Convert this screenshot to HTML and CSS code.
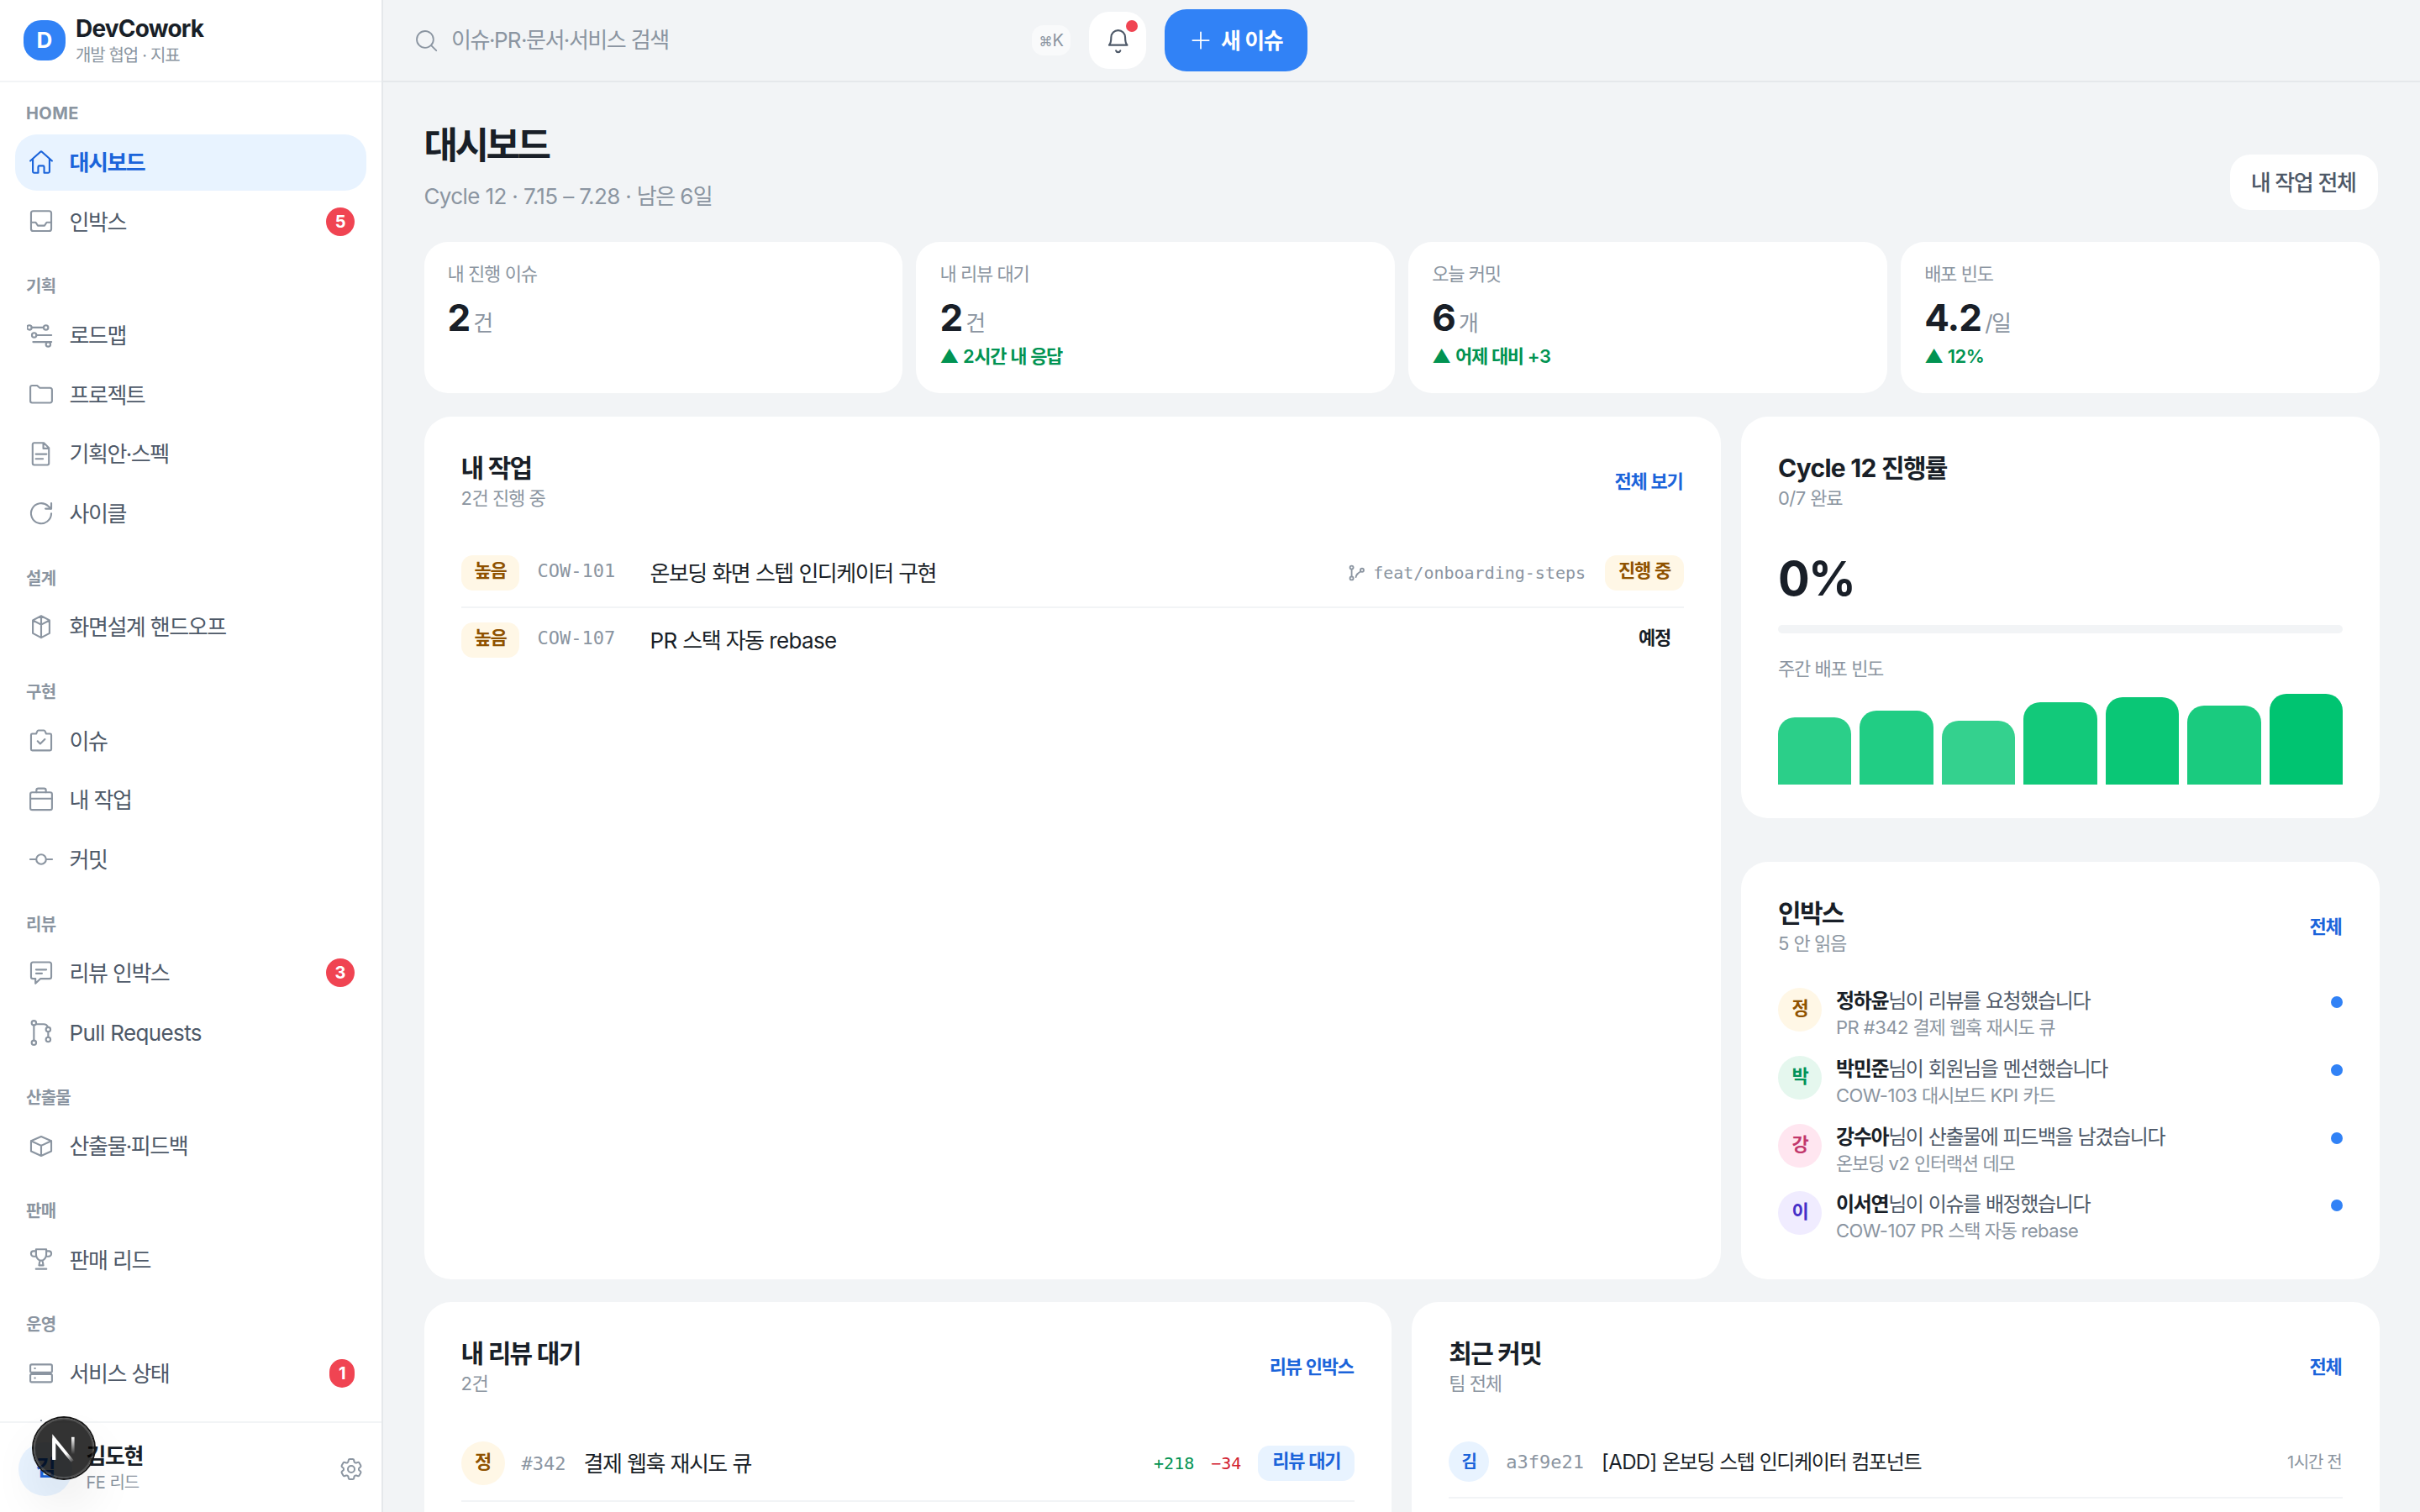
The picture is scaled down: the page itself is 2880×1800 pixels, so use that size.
FILE: index.html
```html
<!DOCTYPE html>
<html lang="ko">
<head>
<meta charset="utf-8">
<title>DevCowork</title>
<link rel="stylesheet" href="styles.css">
</head>
<body>
<div class="app">
  <aside class="sidebar">
    <div class="brand">
      <div class="brand-logo">D</div>
      <div class="brand-text">
        <div class="brand-name">DevCowork</div>
        <div class="brand-sub">개발 협업 · 지표</div>
      </div>
    </div>
    <nav class="nav">
      <section class="nav-group">
        <h3 class="nav-label en">HOME</h3>
        <a class="nav-item active"><svg class="icon" viewBox="0 0 24 24"><path d="M2.9 11l8.3-7.5a1.2 1.2 0 0 1 1.6 0L21.1 11"/><path d="M5 9.4V20a1 1 0 0 0 1 1h3.5v-4.9a1 1 0 0 1 1-1h3a1 1 0 0 1 1 1V21H18a1 1 0 0 0 1-1V9.4"/></svg><span>대시보드</span></a>
        <a class="nav-item"><svg class="icon" viewBox="0 0 24 24"><rect x="3.5" y="3" width="17" height="16.8" rx="1.8"/><path d="M3.5 12.5h3.9l1.8 2.8h5.6l1.8-2.8h3.9"/></svg><span>인박스</span><b class="count">5</b></a>
      </section>
      <section class="nav-group">
        <h3 class="nav-label">기획</h3>
        <a class="nav-item"><svg class="icon" viewBox="0 0 24 24"><circle cx="2.1" cy="5.6" r="1.9"/><circle cx="16" cy="5.6" r="1.9"/><path d="M4 5.6h10.1M8 12h12.6M5.2 17.7h15.4"/><circle cx="6.1" cy="12" r="1.9"/><circle cx="17.9" cy="19.7" r="1.9"/></svg><span>로드맵</span></a>
        <a class="nav-item"><svg class="icon" viewBox="0 0 24 24"><path d="M2.9 5.7A1.500 1.500 0 0 1 4.400 4.200h4.200l2.200 2h8.800a1.500 1.500 0 0 1 1.500 1.500v9.500a1.500 1.500 0 0 1-1.500 1.500H4.400a1.500 1.500 0 0 1-1.500-1.500z"/></svg><span>프로젝트</span></a>
        <a class="nav-item"><svg class="icon" viewBox="0 0 24 24"><path d="M14.200 3H6.100a1.300 1.300 0 0 0-1.300 1.300v15.900a1.300 1.300 0 0 0 1.300 1.300h11.100a1.300 1.300 0 0 0 1.300-1.300V7.300zM13.800 3.200v4.500h4.500M7.500 12.400h9M7.500 16.400h6"/></svg><span>기획안·스펙</span></a>
        <a class="nav-item"><svg class="icon" viewBox="0 0 24 24"><path d="M20.500 12.200a8.500 8.500 0 1 1-2.600-6.200l2.400 2.200"/><path d="M20.500 3.600v4.600h-4.900"/></svg><span>사이클</span></a>
      </section>
      <section class="nav-group">
        <h3 class="nav-label">설계</h3>
        <a class="nav-item"><svg class="icon" viewBox="0 0 24 24"><path d="M12 3l7 3.600v11L12 21.300l-7-3.700v-11zM5 6.700l7 3.600 7-3.600M12 3v18.300"/></svg><span>화면설계 핸드오프</span></a>
      </section>
      <section class="nav-group">
        <h3 class="nav-label">구현</h3>
        <a class="nav-item"><svg class="icon" viewBox="0 0 24 24"><path d="M4.500 6h3.300l1-2.200a1 1 0 0 1 .900-.600h4.600a1 1 0 0 1 .900.600l1 2.200h3.300a1 1 0 0 1 1 1v12a1 1 0 0 1-1 1h-15a1 1 0 0 1-1-1V7a1 1 0 0 1 1-1z"/><path d="M9 12.200l2.200 2.200 3.900-3.800"/></svg><span>이슈</span></a>
        <a class="nav-item"><svg class="icon" viewBox="0 0 24 24"><rect x="2.900" y="5.800" width="18.200" height="14.800" rx="1.600"/><path d="M8 5.800V4.200a1.600 1.600 0 0 1 1.600-1.600h4.800A1.600 1.600 0 0 1 16 4.200v1.600M2.900 11.100h18.200"/></svg><span>내 작업</span></a>
        <a class="nav-item"><svg class="icon" viewBox="0 0 24 24"><circle cx="12" cy="12" r="4.100"/><path d="M2.800 12h5M16.200 12h5"/></svg><span>커밋</span></a>
      </section>
      <section class="nav-group">
        <h3 class="nav-label">리뷰</h3>
        <a class="nav-item"><svg class="icon" viewBox="0 0 24 24"><path d="M5 3.200h14a1.500 1.500 0 0 1 1.500 1.500v10.800A1.500 1.500 0 0 1 19 17h-7.500l-4.300 4v-4H5a1.500 1.500 0 0 1-1.500-1.500V4.700A1.500 1.500 0 0 1 5 3.200zM7.700 9.400h8.600M7.700 12.600h5"/></svg><span>리뷰 인박스</span><b class="count">3</b></a>
        <a class="nav-item"><svg class="icon" viewBox="0 0 24 24"><circle cx="5.900" cy="4.100" r="1.900"/><circle cx="5.900" cy="20.700" r="1.900"/><circle cx="17.900" cy="9.600" r="1.900"/><circle cx="17.900" cy="18" r="1.900"/><path d="M5.900 6v12.800M17.900 11.500v4.600M7.700 5.100h6a4 4 0 0 1 4 2.600"/></svg><span class="en">Pull Requests</span></a>
      </section>
      <section class="nav-group">
        <h3 class="nav-label">산출물</h3>
        <a class="nav-item"><svg class="icon" viewBox="0 0 24 24"><path d="M12 4.300l8.500 3.600v8.700L12 20.500l-8.500-3.900V7.900zM3.500 7.900l8.500 4 8.500-4M12 11.900v8.600"/></svg><span>산출물·피드백</span></a>
      </section>
      <section class="nav-group">
        <h3 class="nav-label">판매</h3>
        <a class="nav-item"><svg class="icon" viewBox="0 0 24 24"><path d="M7.700 3h8.600v4.200c0 2.300-1.500 4.200-3.200 5.200h-2.200c-1.700-1-3.200-2.900-3.200-5.200zM7.700 4.500H5.500a2 2 0 0 0-2 2v.200a2.300 2.300 0 0 0 2.300 2.300h2M16.300 4.500h2.200a2 2 0 0 1 2 2v.200A2.300 2.300 0 0 1 18.200 9h-2M10.900 12.400L10.200 16.500h3.600l-.700-4.100M7.600 19.500h8.800"/></svg><span>판매 리드</span></a>
      </section>
      <section class="nav-group">
        <h3 class="nav-label">운영</h3>
        <a class="nav-item"><svg class="icon" viewBox="0 0 24 24"><rect x="2.900" y="4.500" width="18.200" height="6.700" rx="1.200"/><rect x="2.900" y="12.600" width="18.200" height="6.700" rx="1.200"/><path d="M6.600 7.800h.3M6.600 15.900h.3"/></svg><span>서비스 상태</span><b class="count">1</b></a>
        <a class="nav-item"><svg class="icon" viewBox="0 0 24 24"><path d="M12 1.500v6M4 12h16"/></svg></a>
      </section>
    </nav>
    <div class="profile">
      <div class="avatar avatar-xl blue">김</div>
      <div class="profile-text">
        <div class="profile-name">김도현</div>
        <div class="profile-role"><span class="en">FE</span> 리드</div>
      </div>
      <svg class="icon gear" viewBox="0 0 24 24"><path d="M9.594 3.940c.090-.542.560-.940 1.110-.940h2.593c.550 0 1.020.398 1.110.940l.213 1.281c.063.374.313.686.645.870.074.040.147.083.220.127.325.196.720.257 1.075.124l1.217-.456a1.125 1.125 0 0 1 1.370.490l1.296 2.247a1.125 1.125 0 0 1-.260 1.431l-1.003.827c-.293.241-.438.613-.430.992a7.723 7.723 0 0 1 0 .255c-.008.378.137.750.430.991l1.004.827c.424.350.534.955.260 1.430l-1.298 2.247a1.125 1.125 0 0 1-1.369.491l-1.217-.456c-.355-.133-.750-.072-1.076.124a6.470 6.470 0 0 1-.220.128c-.331.183-.581.495-.644.869l-.213 1.281c-.090.543-.560.940-1.110.940h-2.594c-.550 0-1.019-.398-1.110-.940l-.213-1.281c-.062-.374-.312-.686-.644-.870a6.520 6.520 0 0 1-.220-.127c-.325-.196-.720-.257-1.076-.124l-1.217.456a1.125 1.125 0 0 1-1.369-.490l-1.297-2.247a1.125 1.125 0 0 1 .260-1.431l1.004-.827c.292-.240.437-.613.430-.991a6.932 6.932 0 0 1 0-.255c.007-.380-.138-.751-.430-.992l-1.004-.827a1.125 1.125 0 0 1-.260-1.430l1.297-2.247a1.125 1.125 0 0 1 1.370-.491l1.216.456c.356.133.751.072 1.076-.124.072-.044.146-.086.220-.128.332-.183.582-.495.644-.869l.214-1.280Z"/><circle cx="12" cy="12" r="3"/></svg>
    </div>
  </aside>

  <div class="content">
    <header class="topbar">
      <div class="search">
        <svg class="icon" viewBox="0 0 24 24"><circle cx="10.700" cy="10.700" r="8.200"/><path d="M16.700 16.700l5 5"/></svg>
        <span class="search-text">이슈·<span class="en">PR</span>·문서·서비스 검색</span>
        <span class="kbd"><span class="cmd">⌘</span>K</span>
      </div>
      <button class="bell"><svg class="icon" viewBox="0 0 24 24"><path d="M4.900 16c1.400-1.500 1.700-3.200 1.700-6.500a5.900 5.900 0 0 1 11.800 0c0 3.300.3 5 1.700 6.500zM10.700 20.700a1.900 1.900 0 0 0 3.600 0"/></svg><i class="bell-dot"></i></button>
      <button class="primary"><svg class="icon" viewBox="0 0 24 24"><path d="M12 3.700v16.600M3.700 12h16.600"/></svg><span>새 이슈</span></button>
    </header>

    <main class="page">
      <div class="page-head">
        <div>
          <h1 class="page-title">대시보드</h1>
          <p class="page-sub"><span class="en">Cycle 12 · 7.15 – 7.28 ·</span> 남은 <span class="en">6</span>일</p>
        </div>
        <button class="secondary">내 작업 전체</button>
      </div>

      <div class="kpis">
        <div class="kpi"><div class="kpi-label">내 진행 이슈</div><div class="kpi-value"><b>2</b><span>건</span></div></div>
        <div class="kpi"><div class="kpi-label">내 리뷰 대기</div><div class="kpi-value"><b>2</b><span>건</span></div><div class="kpi-delta"><span class="tri">▲</span> <span class="en">2</span>시간 내 응답</div></div>
        <div class="kpi"><div class="kpi-label">오늘 커밋</div><div class="kpi-value"><b>6</b><span>개</span></div><div class="kpi-delta"><span class="tri">▲</span> 어제 대비 <span class="en">+3</span></div></div>
        <div class="kpi"><div class="kpi-label">배포 빈도</div><div class="kpi-value"><b>4.2</b><span>/일</span></div><div class="kpi-delta"><span class="tri">▲</span> <span class="en">12%</span></div></div>
      </div>

      <div class="row-main">
        <section class="card">
          <div class="card-head">
            <div><h2>내 작업</h2><p><span class="en">2</span>건 진행 중</p></div>
            <a class="link">전체 보기</a>
          </div>
          <div class="task">
            <span class="tag amber">높음</span><span class="mono id">COW-101</span><span class="task-title">온보딩 화면 스텝 인디케이터 구현</span>
            <span class="branch"><svg class="icon" viewBox="0 0 24 24"><circle cx="5" cy="5" r="2.200"/><circle cx="5" cy="19" r="2.200"/><circle cx="18.500" cy="8.500" r="2.200"/><path d="M5 7.200v9.600M10.500 17.500c.3-3.500 2-4.700 6.300-7.400"/></svg><span class="mono">feat/onboarding-steps</span></span>
            <span class="tag amber">진행 중</span>
          </div>
          <div class="task">
            <span class="tag amber">높음</span><span class="mono id">COW-107</span><span class="task-title"><span class="en">PR</span> 스택 자동 <span class="en">rebase</span></span>
            <span class="tag plain">예정</span>
          </div>
        </section>

        <div class="side">
          <section class="card cycle">
            <div class="card-head">
              <div><h2><span class="en">Cycle 12</span> 진행률</h2><p><span class="en">0/7</span> 완료</p></div>
            </div>
            <div class="percent">0%</div>
            <div class="track"></div>
            <div class="chart-label">주간 배포 빈도</div>
            <div class="chart">
              <i style="height:80px;background:#2bcf89"></i>
              <i style="height:88px;background:#21cd84"></i>
              <i style="height:76px;background:#34d18e"></i>
              <i style="height:98px;background:#12c97a"></i>
              <i style="height:104px;background:#0ac776"></i>
              <i style="height:94px;background:#1acb7f"></i>
              <i style="height:108px;background:#00c471"></i>
            </div>
          </section>

          <section class="card inbox">
            <div class="card-head">
              <div><h2>인박스</h2><p><span class="en">5</span> 안 읽음</p></div>
              <a class="link">전체</a>
            </div>
            <div class="notes">
              <div class="note"><div class="avatar amber">정</div><div class="note-body"><div class="note-main"><b>정하윤</b>님이 리뷰를 요청했습니다</div><div class="note-sub"><span class="en">PR #342</span> 결제 웹훅 재시도 큐</div></div><i class="unread"></i></div>
              <div class="note"><div class="avatar green">박</div><div class="note-body"><div class="note-main"><b>박민준</b>님이 회원님을 멘션했습니다</div><div class="note-sub"><span class="en">COW-103</span> 대시보드 <span class="en">KPI</span> 카드</div></div><i class="unread"></i></div>
              <div class="note"><div class="avatar pink">강</div><div class="note-body"><div class="note-main"><b>강수아</b>님이 산출물에 피드백을 남겼습니다</div><div class="note-sub">온보딩 <span class="en">v2</span> 인터랙션 데모</div></div><i class="unread"></i></div>
              <div class="note"><div class="avatar violet">이</div><div class="note-body"><div class="note-main"><b>이서연</b>님이 이슈를 배정했습니다</div><div class="note-sub"><span class="en">COW-107 PR</span> 스택 자동 <span class="en">rebase</span></div></div><i class="unread"></i></div>
            </div>
          </section>
        </div>
      </div>

      <div class="row-half">
        <section class="card">
          <div class="card-head">
            <div><h2>내 리뷰 대기</h2><p><span class="en">2</span>건</p></div>
            <a class="link">리뷰 인박스</a>
          </div>
          <div class="entry">
            <div class="avatar amber">정</div><span class="mono">#342</span><span class="entry-title">결제 웹훅 재시도 큐</span>
            <span class="mono diff add">+218</span><span class="mono diff del">−34</span><span class="tag blue">리뷰 대기</span>
          </div>
        </section>
        <section class="card">
          <div class="card-head">
            <div><h2>최근 커밋</h2><p>팀 전체</p></div>
            <a class="link">전체</a>
          </div>
          <div class="entry">
            <div class="avatar avatar-sm blue">김</div><span class="mono">a3f9e21</span><span class="entry-title commit"><span class="en">[ADD]</span> 온보딩 스텝 인디케이터 컴포넌트</span>
            <span class="time"><span class="en">1</span>시간 전</span>
          </div>
        </section>
      </div>
    </main>
  </div>
</div>
<div class="dev-badge"><svg viewBox="0 0 40 40"><defs><linearGradient id="diag" x1="24" y1="24" x2="31" y2="33" gradientUnits="userSpaceOnUse"><stop stop-color="#fff"/><stop offset="1" stop-color="#fff" stop-opacity="0"/></linearGradient><linearGradient id="stem" x1="0" y1="9" x2="0" y2="26" gradientUnits="userSpaceOnUse"><stop stop-color="#fff"/><stop offset="1" stop-color="#fff" stop-opacity="0"/></linearGradient></defs><path d="M10.200 31.500V10.500L28.500 33" fill="none" stroke="url(#diag)" stroke-width="3.200"/><path d="M10.200 31.500V10.300" stroke="#fff" stroke-width="3.200"/><path d="M29 9v17" stroke="url(#stem)" stroke-width="3"/></svg></div>
</body>
</html>
```
FILE: styles.css
```css
/* Hangul glyphs are set tight; Latin runs use .en for looser spacing */
* {
  box-sizing: border-box;
  margin: 0;
  padding: 0;
  letter-spacing: -0.057em;
  word-spacing: 0.03em;
}

body {
  width: 2880px;
  height: 1800px;
  overflow: hidden;
  position: relative;
  background: #f2f4f6;
  color: #191f28;
  font-family: Inter, "Noto Sans CJK KR", sans-serif;
  font-size: 26px;
}

button { border: 0; font: inherit; color: inherit; }
.en { letter-spacing: -0.024em; word-spacing: 0; }
.mono {
  font-family: "DejaVu Sans Mono", monospace;
  letter-spacing: 0;
  font-size: 22px;
  color: #8b95a1;
}
.icon {
  width: 34px;
  height: 34px;
  flex: none;
  fill: none;
  stroke: currentColor;
  stroke-width: 1.5;
  stroke-linecap: round;
  stroke-linejoin: round;
}

.app { display: flex; height: 1800px; overflow: hidden; }

/* Sidebar */
.sidebar {
  width: 456px;
  flex: none;
  display: flex;
  flex-direction: column;
  background: #fff;
  border-right: 2px solid #e5e8eb;
}
.brand {
  height: 98px;
  flex: none;
  display: flex;
  align-items: center;
  gap: 12px;
  padding-left: 28px;
  border-bottom: 2px solid #f2f4f6;
}
.brand-logo {
  width: 50px;
  height: 48px;
  border-radius: 21px;
  background: #3182f6;
  color: #fff;
  font-size: 26px;
  font-weight: 700;
  line-height: 47px;
  text-align: center;
  letter-spacing: 0;
}
.brand-name { font-size: 28px; font-weight: 700; line-height: 34px; letter-spacing: -0.028em; margin-top: 3px; }
.brand-sub { font-size: 20px; line-height: 31px; color: #8b95a1; }

.nav {
  flex: 1;
  min-height: 0;
  overflow: hidden;
  padding: 18.5px 18px 0;
}
.nav-group { display: flex; flex-direction: column; gap: 4px; margin-bottom: 25.3px; }
.nav-label {
  height: 36px;
  margin-bottom: 3.500px;
  padding-left: 13px;
  font-size: 20px;
  font-weight: 700;
  line-height: 39px;
  color: #8b95a1;
  letter-spacing: -0.036em;
}
.nav-label.en { letter-spacing: 0.02em; line-height: 37px; }
.nav-item {
  height: 66.6px;
  display: flex;
  align-items: center;
  gap: 16.5px;
  padding: 0 14px;
  border-radius: 26px;
  color: #4e5968;
}
.nav-item span { margin-top: -3px; }
.nav-item .en { margin-top: 0; }
.nav-item .icon { color: #8b95a1; }
.nav-item.active { background: #e8f3ff; color: #1b64da; font-weight: 600; }
.nav-item.active .icon { color: #1b64da; }
.count {
  height: 34px;
  margin-left: auto;
  padding: 0 10.500px;
  border-radius: 17px;
  background: #f04452;
  color: #fff;
  font-size: 20px;
  font-weight: 700;
  line-height: 34px;
  letter-spacing: 0;
}

.profile {
  height: 108px;
  flex: none;
  display: flex;
  align-items: center;
  padding: 4px 20px 0 22px;
  border-top: 2px solid #f2f4f6;
}
.profile-text { margin: -2px 0 0 16.5px; }
.profile-name { font-weight: 700; line-height: 34px; }
.profile-role { font-size: 20px; line-height: 28px; color: #8b95a1; }
.gear { width: 32px; height: 32px; margin-left: auto; color: #8b95a1; }

.avatar {
  width: 52px;
  height: 52px;
  flex: none;
  border-radius: 50%;
  font-size: 22px;
  font-weight: 700;
  line-height: 48px;
  text-align: center;
}
.avatar-sm { width: 48px; height: 48px; font-size: 20px; line-height: 48px; }
.avatar-xl { width: 64px; height: 64px; font-size: 26px; line-height: 62px; }
.amber { background: #fff7e6; color: #8f5200; }
.green { background: #e5f7ee; color: #029359; }
.pink { background: #ffe6f0; color: #c2386c; }
.violet { background: #f0ecff; color: #4630c8; }
.blue { background: #e8f3ff; color: #1b64da; }

/* Top bar */
.content { flex: 1; min-width: 0; display: flex; flex-direction: column; overflow: hidden; }
.topbar {
  height: 98px;
  flex: none;
  display: flex;
  align-items: center;
  gap: 22px;
  padding-left: 36px;
  border-bottom: 2px solid #e5e8eb;
}
.search {
  width: 782px;
  display: flex;
  align-items: center;
  padding-left: 1px;
  color: #8b95a1;
}
.search .icon { width: 29px; height: 29px; }
.search-text { margin-left: 15px; line-height: 40px; }
.kbd {
  width: 46px;
  height: 36px;
  margin-left: auto;
  border-radius: 14px;
  background: #f9fafb;
  font-size: 20px;
  line-height: 37px;
  text-align: center;
  letter-spacing: -0.02em;
}
.cmd { font-size: 16px; letter-spacing: 0; }
.bell {
  position: relative;
  width: 68px;
  height: 68px;
  display: flex;
  align-items: center;
  justify-content: center;
  border-radius: 24px;
  background: #fff;
  color: #4e5968;
}
.bell-dot {
  position: absolute;
  top: 10px;
  right: 10px;
  width: 14px;
  height: 14px;
  border-radius: 50%;
  background: #f04452;
}
.primary {
  width: 170px;
  height: 74px;
  display: flex;
  align-items: center;
  justify-content: center;
  gap: 10px;
  padding-right: 1px;
  border-radius: 26px;
  background: #3182f6;
  color: #fff;
  font-weight: 600;
}
.primary span { margin-top: -4px; }
.primary .icon { width: 28px; height: 28px; }

/* Page */
.page { padding: 0 48px 0 48.5px; display: flex; flex-direction: column; gap: 28px; }
.page-head {
  height: 162px;
  flex: none;
  display: flex;
  align-items: flex-end;
  justify-content: space-between;
}
.page-title { font-size: 44px; font-weight: 700; line-height: 60px; letter-spacing: -0.08em; }
.page-sub { line-height: 40px; margin: 11px 0 6.500px; color: #8b95a1; }
.secondary {
  width: 176px;
  height: 66px;
  margin: 0 2px 10px 0;
  padding: 0 2px 3px 0;
  border-radius: 24px;
  background: #fff;
  color: #4e5968;
  font-weight: 500;
}

.kpis { display: grid; grid-template-columns: repeat(4, 1fr); gap: 16px; }
.kpi { height: 180px; padding: 22px 28px; border-radius: 28px; background: #fff; }
.kpi-label { font-size: 22px; line-height: 32px; color: #8b95a1; }
.kpi-value { display: flex; align-items: baseline; gap: 4px; height: 48px; margin-top: 12px; line-height: 48px; }
.kpi-value b { font-size: 44px; letter-spacing: -0.02em; }
.kpi-value span { color: #8b95a1; }
.kpi-delta { font-size: 22px; font-weight: 600; line-height: 44px; color: #019352; }
.tri { letter-spacing: 0; }

.card { min-width: 0; padding: 40px 44px; border-radius: 32px; background: #fff; }
.card-head {
  height: 72px;
  margin-bottom: 38px;
  display: flex;
  align-items: center;
  justify-content: space-between;
}
.card-head h2 { font-size: 30px; font-weight: 700; line-height: 43px; }
.card-head p { font-size: 22px; line-height: 29px; color: #8b95a1; }
.link { margin: -3px 1.500px 0 0; font-size: 22px; font-weight: 600; color: #1b64da; }

.row-main { height: 1026px; flex: none; display: grid; grid-template-columns: 1fr 760px; gap: 24px; }
.row-half { height: 250px; flex: none; display: grid; grid-template-columns: 1fr 1fr; gap: 24px; }
.row-half .card { border-radius: 32px 32px 0 0; }
.side { display: flex; flex-direction: column; gap: 52px; }

.tag {
  height: 42px;
  padding: 0 16px;
  border-radius: 14px;
  font-size: 22px;
  font-weight: 600;
  line-height: 37px;
  white-space: nowrap;
}
.task {
  height: 78px;
  padding: 16px 0 20px;
  display: flex;
  align-items: center;
  border-bottom: 2px solid #f2f4f6;
}
.task:last-child { border-bottom: 0; padding-bottom: 18px; }
.id { width: 114px; margin: -5px 20px 0 21px; }
.task-title { flex: 1; margin-top: -3px; }
.branch { display: flex; align-items: center; gap: 8px; margin-right: 23px; color: #8b95a1; }
.branch .icon { width: 22px; height: 22px; stroke-width: 2; }
.branch .mono { font-size: 20px; }

.cycle { height: 478px; }
.percent { font-size: 56px; font-weight: 700; line-height: 86px; letter-spacing: -0.03em; }
.track { height: 10px; margin-top: 12px; border-radius: 5px; background: #f2f4f6; }
.chart-label { margin-top: 26px; font-size: 22px; line-height: 32px; color: #8b95a1; }
.chart { height: 108px; margin-top: 14px; display: flex; align-items: flex-end; gap: 10px; }
.chart i { flex: 1; border-radius: 20px 20px 0 0; }

.inbox { flex: 1; }
.notes { display: flex; flex-direction: column; gap: 16px; }
.note { height: 64.800px; display: flex; }
.note-body { flex: 1; margin: -1px 0 0 17px; }
.note-main { font-size: 24px; line-height: 33px; color: #4e5968; }
.note-main b { color: #191f28; }
.note-sub { font-size: 22px; line-height: 30px; color: #8b95a1; }
.unread { width: 14px; height: 14px; margin-top: 10px; border-radius: 50%; background: #3182f6; }

.entry {
  padding: 16px 0 18px;
  display: flex;
  align-items: center;
  gap: 20px;
  border-bottom: 2px solid #f2f4f6;
}
.entry .tag { padding: 0 17px; }
.entry-title { flex: 1; margin: -3px 0 0 1px; }
.entry-title.commit { font-size: 24px; }
.entry .diff { font-size: 20px; }
.entry .add { color: #019352; }
.entry .del { color: #d22030; }
.time { margin: -1px 1.500px 0 0; font-size: 20px; color: #8b95a1; }

/* Floating development indicator */
.dev-badge {
  position: absolute;
  left: 40px;
  bottom: 40px;
  width: 72px;
  height: 72px;
  border-radius: 50%;
  background: rgba(0, 0, 0, 0.8);
  box-shadow: 0 0 0 2px #171717, inset 0 0 0 2px rgba(255, 255, 255, 0.14), 0 32px 64px -16px rgba(0, 0, 0, 0.24);
  display: flex;
  align-items: center;
  justify-content: center;
}
.dev-badge svg { width: 48px; height: 48px; }
```
